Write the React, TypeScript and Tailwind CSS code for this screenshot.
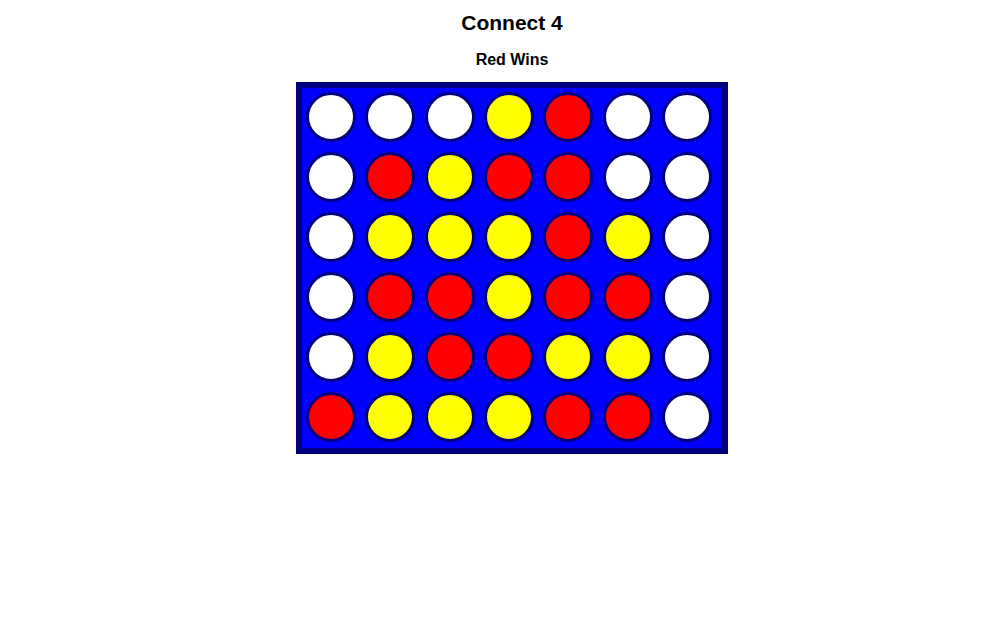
import React from "react"

type Cell = "W" | "R" | "Y"

const board: Cell[][] = [
  ["W", "W", "W", "Y", "R", "W", "W"],
  ["W", "R", "Y", "R", "R", "W", "W"],
  ["W", "Y", "Y", "Y", "R", "Y", "W"],
  ["W", "R", "R", "Y", "R", "R", "W"],
  ["W", "Y", "R", "R", "Y", "Y", "W"],
  ["R", "Y", "Y", "Y", "R", "R", "W"],
]

const discColor: Record<Cell, string> = {
  W: "bg-white",
  R: "bg-[#ff0000]",
  Y: "bg-[#ffff00]",
}

export default function App() {
  return (
    <div className="w-[1007px] h-[638px] overflow-hidden bg-white">
      <div className="w-[1024px] flex flex-col items-center font-['Liberation_Sans',Arial,sans-serif] text-black">
        <h1 className="mt-[11px] text-[21px] leading-[24px] font-bold">Connect 4</h1>
        <h2 className="mt-[16px] text-[16px] leading-[18px] font-bold">Red Wins</h2>
        <div className="mt-[13px] border-[6px] border-[#000080] bg-[#0000ff]">
          <div className="w-[420px] h-[360px] grid grid-cols-[repeat(7,59.33px)] grid-rows-[repeat(6,60px)]">
            {board.flatMap((row, r) =>
              row.map((c, i) => (
                <div key={`${r}-${i}`} className="pt-[4px] pl-[4px]">
                  <div className={`w-[50px] h-[50px] rounded-full border-[3px] border-[#000080] ${discColor[c]}`} />
                </div>
              ))
            )}
          </div>
        </div>
      </div>
    </div>
  )
}
